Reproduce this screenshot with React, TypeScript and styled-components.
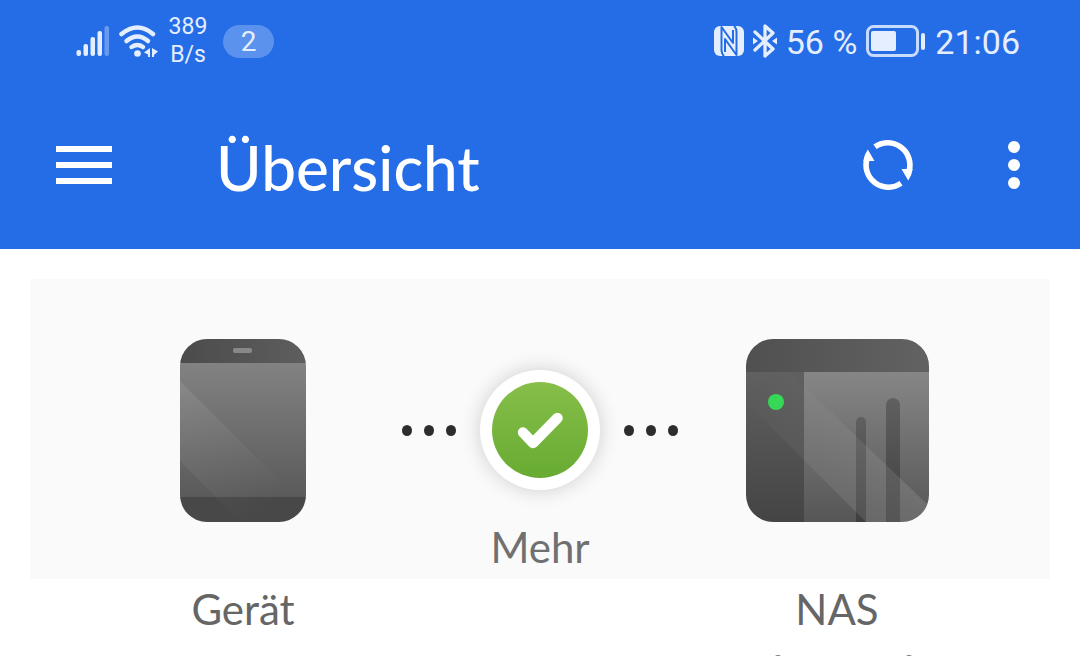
import React from "react";
import styled, { createGlobalStyle } from "styled-components";

const GlobalStyle = createGlobalStyle`
  *, *::before, *::after { box-sizing: border-box; }
  body { margin: 0; background: #fff; font-family: Lato, "Open Sans", sans-serif; color: #666; }
  svg { display: block; flex: none; }
`;

const Header = styled.header`
  background: #256de6;
  color: #fff;
`;

const StatusBar = styled.div`
  display: flex;
  justify-content: space-between;
  align-items: center;
  height: 82px;
  padding: 0 60px 0 76px;
  color: #e4eeff;
  font-family: Roboto, sans-serif;
`;

const StatusGroup = styled.div`
  display: flex;
  align-items: center;
  gap: 9px;
`;

const Speed = styled.div`
  width: 40px;
  font-size: 23px;
  line-height: 28px;
  text-align: center;
`;

const CountBadge = styled.span`
  width: 51px;
  margin-left: 6px;
  border-radius: 17px;
  background: #5b92ee;
  font-size: 28px;
  line-height: 33px;
  text-align: center;
`;

const StatusText = styled.span`
  font-size: 34px;
  line-height: 40px;
  padding-top: 2px;
  white-space: nowrap;
`;

const Toolbar = styled.div`
  display: flex;
  align-items: center;
  height: 167px;
  padding: 0 52px 2px 56px;
`;

const IconButton = styled.button`
  display: flex;
  padding: 0;
  border: 0;
  background: none;
  color: inherit;
  cursor: pointer;
`;

const Title = styled.h1`
  flex: 1;
  margin: 0;
  padding: 4px 0 0 104px;
  font-size: 62px;
  font-weight: 500;
  line-height: 72px;
`;

const Actions = styled.div`
  display: flex;
  align-items: center;
  gap: 87px;
`;

const Main = styled.main`
  padding: 30px 30px 0;
`;

const Columns = styled.div`
  display: grid;
  grid-template-columns: 1fr 280px 1fr;
  padding: 0 56px;
`;

const Panel = styled(Columns)`
  min-height: 300px;
  background: #fafafa;
`;

const Device = styled.div`
  display: flex;
  justify-content: center;
  padding-top: 59px;
`;

const Connection = styled.button`
  display: flex;
  flex-direction: column;
  align-items: center;
  padding: 91px 0 0;
  border: 0;
  background: none;
  font: inherit;
  color: #707070;
  cursor: pointer;
`;

const LinkRow = styled.span`
  display: flex;
  align-items: center;
  gap: 24px;
`;

const Dots = styled.span`
  display: flex;
  gap: 12px;
`;

const Dot = styled.span`
  width: 10px;
  height: 11px;
  border-radius: 50%;
  background: #2d2d2d;
`;

const CheckRing = styled.span`
  display: flex;
  align-items: center;
  justify-content: center;
  width: 120px;
  height: 120px;
  border-radius: 50%;
  background: #fff;
  box-shadow: 0 0 20px rgba(0, 0, 0, 0.18);
`;

const CheckDisc = styled.span`
  display: flex;
  width: 96px;
  height: 96px;
  border-radius: 50%;
  background: linear-gradient(#86bf49, #68ab32);
`;

const Label = styled.span`
  font-size: 42px;
  line-height: 60px;
  text-align: center;
`;

const MoreLabel = styled(Label)`
  margin-top: 27px;
`;

const DeviceName = styled.div`
  display: flex;
  flex-direction: column;
  align-items: center;
  gap: 15px;
`;

const SignalIcon = () => (
  <svg width="34" height="32" viewBox="0 0 34 32" fill="currentColor" aria-hidden="true">
    <rect x="0.500" y="25" width="4.500" height="6" rx="2" />
    <rect x="7.500" y="19" width="4.500" height="12" rx="2" />
    <rect x="14.500" y="12" width="4.500" height="19" rx="2" />
    <rect x="21.500" y="6" width="4.500" height="25" rx="2" />
    <rect x="28.500" y="1" width="4.500" height="30" rx="2" opacity="0.35" />
  </svg>
);

const WifiIcon = () => (
  <svg width="40" height="34" viewBox="0 0 40 34" fill="none" stroke="currentColor" strokeWidth="4.500" strokeLinecap="round" aria-hidden="true">
    <path d="M2.500 10Q18.500-3 34 10" />
    <path d="M7.500 17Q18.500 8 29 17" />
    <path d="M12.500 23Q18.500 19 24 23" />
    <circle cx="18.500" cy="29.500" r="3.300" fill="currentColor" stroke="none" />
    <path d="M31 24v9h-2v-2.500l-4-2zM33 24v9h2v-2l4-3.500z" fill="currentColor" stroke="none" />
  </svg>
);

const NfcIcon = () => (
  <svg width="30" height="30" viewBox="0 0 30 30" aria-hidden="true">
    <rect width="30" height="30" rx="6" fill="currentColor" />
    <g fill="none" stroke="#256de6" strokeWidth="2" strokeLinejoin="round">
      <path d="M10 30Q7.500 28 7.500 24V1L19 17V4" />
      <path d="M20 0Q22.500 2 22.500 6V29L11 13V26" />
    </g>
  </svg>
);

const BluetoothIcon = () => (
  <svg width="24" height="34" viewBox="0 0 24 34" fill="none" stroke="currentColor" strokeWidth="3.300" strokeLinejoin="round" strokeLinecap="round" aria-hidden="true">
    <path d="M2 8L20 25L12 32V2L20 9L2 26" />
    <path d="M0 13.500L5 17L0 20.500zM24 13.500L19 17L24 20.500z" fill="currentColor" stroke="none" />
  </svg>
);

const BatteryIcon = () => (
  <svg width="60" height="32" viewBox="0 0 60 32" fill="currentColor" aria-hidden="true">
    <rect x="1.500" y="1.500" width="50" height="29" rx="6" fill="none" stroke="currentColor" strokeWidth="3" opacity="0.85" />
    <rect x="5" y="6" width="25" height="20" rx="2" />
    <rect x="55" y="8" width="4" height="17" rx="2" />
  </svg>
);

const MenuIcon = () => (
  <svg width="56" height="38" viewBox="0 0 56 38" fill="currentColor" aria-hidden="true">
    <path d="M0 0h56v6H0zM0 16h56v6H0zM0 32h56v6H0z" />
  </svg>
);

const RefreshIcon = () => (
  <svg width="50" height="50" viewBox="0 0 50 50" fill="none" stroke="currentColor" strokeWidth="5.600" aria-hidden="true">
    <path d="M12 6.800A22.200 22.200 0 0 1 45.800 32" />
    <path d="M38 43.200A22.200 22.200 0 0 1 4.200 18" />
    <path d="M38.500 29H49.700Q49 35 45.200 40.500zM11.500 21H0.300Q1 15 4.800 9.500z" fill="currentColor" stroke="none" />
  </svg>
);

const MoreIcon = () => (
  <svg width="28" height="48" viewBox="0 0 28 48" fill="currentColor" aria-hidden="true">
    <circle cx="14" cy="6" r="6" />
    <circle cx="14" cy="24" r="6" />
    <circle cx="14" cy="42" r="6" />
  </svg>
);

const CheckIcon = () => (
  <svg width="96" height="96" viewBox="0 0 96 96" fill="none" stroke="#fff" strokeWidth="10.500" strokeLinecap="round" strokeLinejoin="round" aria-hidden="true">
    <path d="M31 50.500L41 61L65.500 36" />
  </svg>
);

const PhoneDrawing = () => (
  <svg width="126" height="184" viewBox="0 0 126 184" role="img" aria-label="Gerät">
    <defs>
      <clipPath id="phoneBody"><rect y="1" width="126" height="183" rx="27" /></clipPath>
      <linearGradient id="phoneTop"><stop stopColor="#4b4b4b" /><stop offset="1" stopColor="#5e5e5e" /></linearGradient>
      <linearGradient id="phoneScreen" x2="0" y2="1"><stop stopColor="#828282" /><stop offset="1" stopColor="#5a5a5a" /></linearGradient>
      <linearGradient id="phoneShine" gradientUnits="userSpaceOnUse" x1="0" y1="50" x2="100" y2="160"><stop stopColor="#fff" stopOpacity="0.09" /><stop offset="1" stopColor="#fff" stopOpacity="0" /></linearGradient>
    </defs>
    <g clipPath="url(#phoneBody)">
      <rect width="126" height="25" fill="url(#phoneTop)" />
      <rect y="25" width="126" height="135" fill="url(#phoneScreen)" />
      <rect y="159" width="126" height="25" fill="#484848" />
      <path d="M0 43L126 169V184H61L0 123z" fill="url(#phoneShine)" />
      <rect x="53" y="10" width="19" height="5" rx="2" fill="#888" />
    </g>
  </svg>
);

const NasDrawing = () => (
  <svg width="183" height="184" viewBox="0 0 183 184" role="img" aria-label="NAS">
    <defs>
      <clipPath id="nasBody"><rect y="1" width="183" height="183" rx="27" /></clipPath>
      <linearGradient id="nasTop"><stop stopColor="#505050" /><stop offset="1" stopColor="#626262" /></linearGradient>
      <linearGradient id="nasSide" x2="0" y2="1"><stop stopColor="#606060" /><stop offset="1" stopColor="#444" /></linearGradient>
      <linearGradient id="nasFront" x2="0" y2="1"><stop stopColor="#868686" /><stop offset="1" stopColor="#565656" /></linearGradient>
      <linearGradient id="nasSlot" x2="0" y2="1"><stop stopColor="#606060" /><stop offset="1" stopColor="#3c3c3c" /></linearGradient>
      <linearGradient id="nasShine" gradientUnits="userSpaceOnUse" x1="20" y1="40" x2="160" y2="180"><stop stopColor="#fff" stopOpacity="0" /><stop offset="1" stopColor="#fff" stopOpacity="0.12" /></linearGradient>
    </defs>
    <g clipPath="url(#nasBody)">
      <rect width="183" height="34" fill="url(#nasTop)" />
      <rect y="34" width="58" height="150" fill="url(#nasSide)" />
      <rect x="58" y="34" width="125" height="150" fill="url(#nasFront)" />
      <rect x="110" y="79" width="10" height="115" rx="5" fill="url(#nasSlot)" />
      <rect x="140" y="60" width="14" height="134" rx="7" fill="url(#nasSlot)" />
      <path d="M0 64V34H43L183 168V184H120z" fill="url(#nasShine)" />
      <circle cx="30" cy="64" r="8" fill="#35d957" />
    </g>
  </svg>
);

const LineEdge = () => (
  <svg width="160" height="2" viewBox="0 0 160 2" aria-hidden="true">
    <path d="M18 2Q21 0 24 2zM149 2Q152 0 155 2z" fill="#777" />
  </svg>
);

const LinkDots = () => (
  <Dots><Dot /><Dot /><Dot /></Dots>
);

export default function App() {
  return (
    <>
      <GlobalStyle />
      <Header>
        <StatusBar>
          <StatusGroup>
            <SignalIcon />
            <WifiIcon />
            <Speed>389<br />B/s</Speed>
            <CountBadge>2</CountBadge>
          </StatusGroup>
          <StatusGroup>
            <NfcIcon />
            <BluetoothIcon />
            <StatusText>56 %</StatusText>
            <BatteryIcon />
            <StatusText>21:06</StatusText>
          </StatusGroup>
        </StatusBar>
        <Toolbar>
          <IconButton type="button" aria-label="Menü"><MenuIcon /></IconButton>
          <Title>Übersicht</Title>
          <Actions>
            <IconButton type="button" aria-label="Aktualisieren"><RefreshIcon /></IconButton>
            <IconButton type="button" aria-label="Weitere Optionen"><MoreIcon /></IconButton>
          </Actions>
        </Toolbar>
      </Header>
      <Main>
        <Panel>
          <Device><PhoneDrawing /></Device>
          <Connection type="button">
            <LinkRow>
              <LinkDots />
              <CheckRing><CheckDisc><CheckIcon /></CheckDisc></CheckRing>
              <LinkDots />
            </LinkRow>
            <MoreLabel>Mehr</MoreLabel>
          </Connection>
          <Device><NasDrawing /></Device>
        </Panel>
        <Columns>
          <DeviceName><Label>Gerät</Label></DeviceName>
          <span />
          <DeviceName><Label>NAS</Label><LineEdge /></DeviceName>
        </Columns>
      </Main>
    </>
  );
}
